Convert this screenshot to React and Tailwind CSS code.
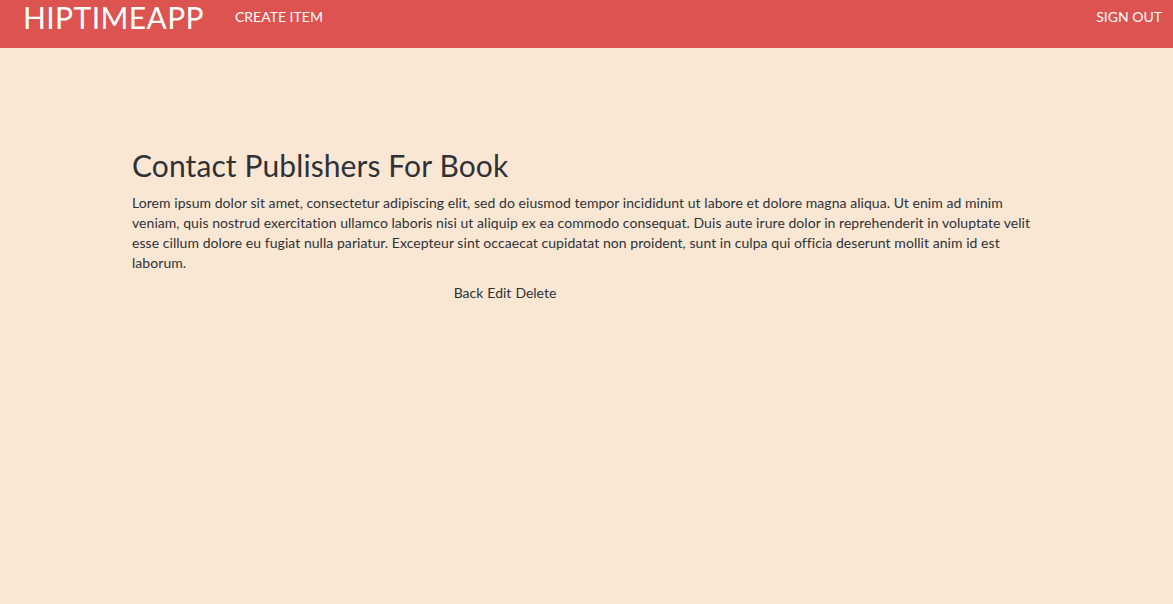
export default function App() {
  return (
    <div className="min-h-[604px] bg-[#f9e7d4] text-[#2e3236]" style={{ fontFamily: "Lato, 'Liberation Sans', sans-serif" }}>
      <nav className="h-[48px] bg-[#dc5350] flex items-start">
        <div className="pl-[23px] pt-[0px] text-[30px] leading-[34px] font-normal text-white tracking-[0.4px]">HIPTIMEAPP</div>
        <div className="ml-[31px] pt-[8px] text-[14px] leading-[18px] text-white">CREATE ITEM</div>
        <div className="ml-auto pr-[11px] pt-[8px] text-[14px] leading-[18px] text-white">SIGN OUT</div>
      </nav>
      <main className="pl-[132px] pt-[99px]">
        <div className="w-[912px]">
          <h1 className="text-[30px] leading-[36px] font-normal tracking-[0.1px]">Contact Publishers For Book</h1>
          <p className="mt-[10px] text-[14px] leading-[20px] tracking-[0.05px]">
            Lorem ipsum dolor sit amet, consectetur adipiscing elit, sed do eiusmod tempor incididunt ut labore et dolore magna aliqua. Ut enim ad minim veniam, quis nostrud exercitation ullamco laboris nisi ut aliquip ex ea commodo consequat. Duis aute irure dolor in reprehenderit in voluptate velit esse cillum dolore eu fugiat nulla pariatur. Excepteur sint occaecat cupidatat non proident, sunt in culpa qui officia deserunt mollit anim id est laborum.
          </p>
        </div>
        <div className="w-[746px] mt-[10px] flex justify-center gap-[4px] text-[14px] leading-[20px]">
          <span>Back</span>
          <span>Edit</span>
          <span>Delete</span>
        </div>
      </main>
    </div>
  );
}
